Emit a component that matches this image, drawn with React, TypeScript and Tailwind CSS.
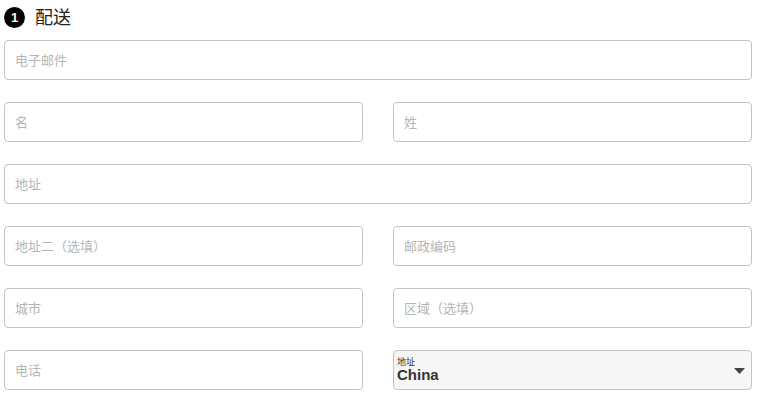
import { ReactNode } from "react"

const font = { fontFamily: '"Liberation Sans", "Noto Sans CJK SC", sans-serif' }

const Field = ({ placeholder }: { placeholder: string }) => (
  <input
    placeholder={placeholder}
    className="block w-full h-[40px] rounded-[4px] border border-[#c3c3c3] bg-white px-[10px] text-[13px] text-[#333] placeholder:text-[#b5b5b5] outline-none"
  />
)

const Row = ({ children }: { children: ReactNode }) => (
  <div className="grid grid-cols-2 gap-[30px]">{children}</div>
)

export default function App() {
  return (
    <div className="w-[772px] h-[402px] bg-white overflow-hidden" style={font}>
      <div className="w-[748px] ml-[4px] pt-[6px]">
        <div className="flex items-center h-[23px] mb-[11px]">
          <span className="flex items-center justify-center w-[21px] h-[21px] rounded-full bg-black text-white text-[13px] font-bold leading-none">
            1
          </span>
          <span className="ml-[10px] text-[18px] text-[#222] leading-none">配送</span>
        </div>
        <div className="flex flex-col gap-[22px]">
          <Field placeholder="电子邮件" />
          <Row>
            <Field placeholder="名" />
            <Field placeholder="姓" />
          </Row>
          <Field placeholder="地址" />
          <Row>
            <Field placeholder="地址二（选填）" />
            <Field placeholder="邮政编码" />
          </Row>
          <Row>
            <Field placeholder="城市" />
            <Field placeholder="区域（选填）" />
          </Row>
          <Row>
            <Field placeholder="电话" />
            <div className="relative h-[40px] rounded-[4px] border border-[#c3c3c3] bg-[#f6f6f6] pl-[3px] flex flex-col justify-center">
              <span className="text-[9px] leading-[10px] text-[#333]">地址</span>
              <span className="text-[15px] leading-[16px] font-bold text-[#333]">China</span>
              <svg
                className="absolute right-[6px] top-[17px]"
                width="11"
                height="6"
                viewBox="0 0 11 6"
              >
                <path d="M0 0 L11 0 L5.5 6 Z" fill="#444" />
              </svg>
            </div>
          </Row>
        </div>
      </div>
    </div>
  )
}
